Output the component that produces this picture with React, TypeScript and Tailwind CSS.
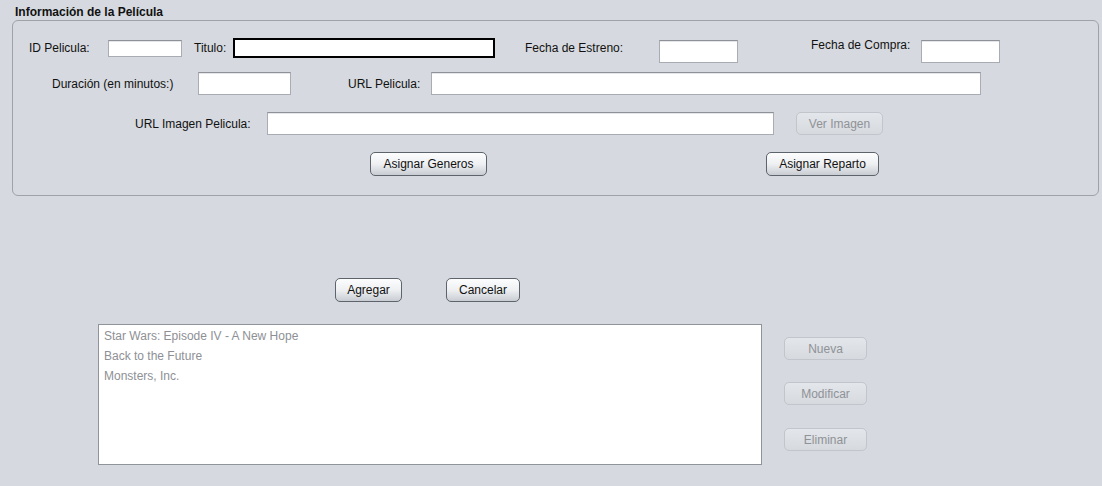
import React from 'react';

const font = { fontFamily: '"Liberation Sans", Arial, sans-serif' };

function Field({ w, h = 'h-[23px]', mt = 'mt-0' }: { w: string; h?: string; mt?: string }) {
  return (
    <div
      className={`${w} ${h} ${mt} shrink-0 bg-white border border-[#a9adb3] border-t-[#8e9298] shadow-[inset_0_1px_0_#e4e6ea]`}
    />
  );
}

function Label({ text, w, ml, mt = 'mt-[4px]' }: { text: string; w: string; ml: string; mt?: string }) {
  return (
    <div className={`${w} ${ml} ${mt} shrink-0 leading-[16px] whitespace-nowrap`}>{text}</div>
  );
}

function Btn({ text, w, h = 'h-[24px]', ml = 'ml-0', mt = 'mt-0', disabled = false }: {
  text: string; w: string; h?: string; ml?: string; mt?: string; disabled?: boolean;
}) {
  return (
    <div
      className={`${w} ${h} ${ml} ${mt} shrink-0 flex items-center justify-center rounded-[5px] border ${
        disabled
          ? 'border-[#c2c6cc] bg-gradient-to-b from-[#e3e6ea] to-[#d6d9de] text-[#8f9297]'
          : 'border-[#5e646c] bg-gradient-to-b from-[#fdfdfe] via-[#eef0f2] to-[#c9cdd3] text-[#111]'
      }`}
    >
      {text}
    </div>
  );
}

export default function App() {
  const movies = ['Star Wars: Episode IV - A New Hope', 'Back to the Future', 'Monsters, Inc.'];

  return (
    <div className="w-[1102px] h-[486px] bg-[#d6d9df] text-[12px] text-[#111] overflow-hidden" style={font}>
      <div className="pl-[15px] pt-[5px] h-[20px] font-bold leading-[14px]">Información de la Película</div>

      {/* group box */}
      <div className="ml-[12px] w-[1087px] h-[176px] border border-[#9fa3a8] rounded-[6px] flex flex-col">
        {/* row 1 */}
        <div className="mt-[17px] h-[25px] flex items-start">
          <Label text="ID Pelicula:" w="w-[79px]" ml="ml-[16px]" mt="mt-[2px]" />
          <Field w="w-[74px]" h="h-[17px]" mt="mt-[2px]" />
          <Label text="Titulo:" w="w-[39px]" ml="ml-[12px]" mt="mt-[2px]" />
          <div className="w-[262px] h-[20px] shrink-0 bg-white border-2 border-black" />
          <Label text="Fecha de Estreno:" w="w-[134px]" ml="ml-[30px]" mt="mt-[2px]" />
          <Field w="w-[79px]" mt="mt-[2px]" />
          <Label text="Fecha de Compra:" w="w-[110px]" ml="ml-[73px]" mt="mt-[-1px]" />
          <Field w="w-[79px]" mt="mt-[2px]" />
        </div>

        {/* row 2 */}
        <div className="mt-[9px] h-[23px] flex items-start">
          <Label text="Duración (en minutos:)" w="w-[146px]" ml="ml-[39px]" />
          <Field w="w-[93px]" />
          <Label text="URL Pelicula:" w="w-[83px]" ml="ml-[57px]" />
          <Field w="w-[550px]" />
        </div>

        {/* row 3 */}
        <div className="mt-[17px] h-[23px] flex items-start">
          <Label text="URL Imagen Pelicula:" w="w-[132px]" ml="ml-[122px]" />
          <Field w="w-[507px]" />
          <Btn text="Ver Imagen" w="w-[87px]" h="h-[23px]" ml="ml-[22px]" disabled />
        </div>

        {/* row 4 */}
        <div className="mt-[17px] h-[24px] flex items-start">
          <Btn text="Asignar Generos" w="w-[117px]" ml="ml-[357px]" />
          <Btn text="Asignar Reparto" w="w-[113px]" ml="ml-[279px]" />
        </div>
      </div>

      {/* actions */}
      <div className="mt-[82px] h-[24px] flex">
        <Btn text="Agregar" w="w-[67px]" ml="ml-[335px]" />
        <Btn text="Cancelar" w="w-[74px]" ml="ml-[44px]" />
      </div>

      {/* list + side buttons */}
      <div className="mt-[22px] flex items-start">
        <div className="ml-[98px] w-[664px] h-[141px] shrink-0 bg-white border border-[#8f949b] pt-[1px] pl-[5px] text-[#8e9095]">
          {movies.map(m => (
            <div key={m} className="h-[20px] leading-[20px]">{m}</div>
          ))}
        </div>
        <div className="ml-[22px] mt-[13px] flex flex-col">
          <Btn text="Nueva" w="w-[83px]" h="h-[23px]" disabled />
          <Btn text="Modificar" w="w-[83px]" h="h-[23px]" mt="mt-[22px]" disabled />
          <Btn text="Eliminar" w="w-[83px]" h="h-[23px]" mt="mt-[23px]" disabled />
        </div>
      </div>
    </div>
  );
}
